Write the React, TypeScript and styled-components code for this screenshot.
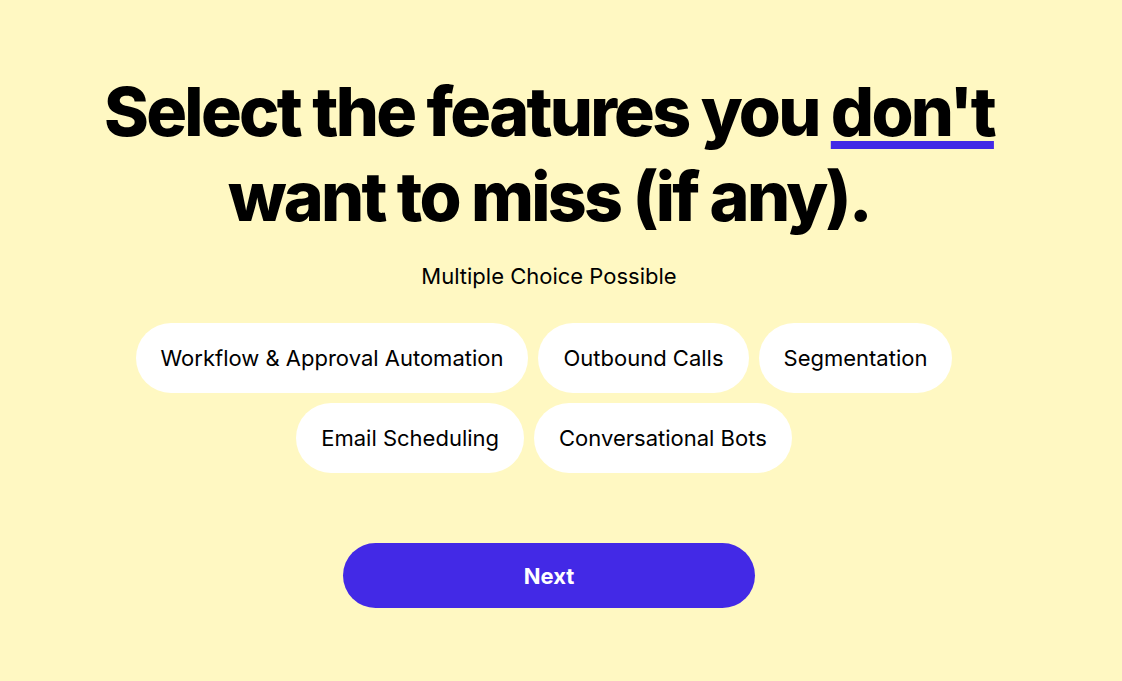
import React from 'react'
import styled, { createGlobalStyle } from 'styled-components'

const Colors = {
  Background: '#fff8c2',
  Primary: '#4329e6',
  Text: '#000000',
  Pill: '#ffffff',
}

const features = [
  ['Workflow & Approval Automation', 'Outbound Calls', 'Segmentation'],
  ['Email Scheduling', 'Conversational Bots'],
]

export default function App() {
  return (
    <>
      <GlobalStyle />
      <Page>
        <Heading>
          Select the features you <Underlined>don't</Underlined>
          <br />
          want to miss (if any).
        </Heading>
        <Hint>Multiple Choice Possible</Hint>
        <Options>
          {features.map((row, i) => (
            <OptionRow key={i}>
              {row.map((label) => (
                <Pill key={label} type="button">
                  {label}
                </Pill>
              ))}
            </OptionRow>
          ))}
        </Options>
        <NextButton type="button">Next</NextButton>
      </Page>
    </>
  )
}

const GlobalStyle = createGlobalStyle`
  html, body {
    margin: 0;
    padding: 0;
    background: ${Colors.Background};
  }
  body {
    font-family: Inter, 'Noto Sans', sans-serif;
    color: ${Colors.Text};
  }
`

const Page = styled.main`
  display: flex;
  flex-direction: column;
  align-items: center;
  min-height: 681px;
  padding: 69px 24px 0 0;
  box-sizing: border-box;
`

const Heading = styled.h1`
  margin: 0;
  font-size: 68px;
  line-height: 85px;
  font-weight: 800;
  letter-spacing: -0.04em;
  text-align: center;
`

const Underlined = styled.span`
  text-decoration: underline;
  text-decoration-color: ${Colors.Primary};
  text-decoration-thickness: 8px;
  text-underline-offset: 5px;
`

const Hint = styled.p`
  margin: 22px 0 0;
  font-size: 22px;
  line-height: 30px;
`

const Options = styled.div`
  display: flex;
  flex-direction: column;
  margin-top: 32px;
`

const OptionRow = styled.div`
  display: flex;
  justify-content: center;
`

const Pill = styled.button`
  height: 70px;
  margin: 0 10px 10px 0;
  padding: 0 25px;
  border: none;
  border-radius: 35px;
  background: ${Colors.Pill};
  font-family: inherit;
  font-size: 22px;
  color: ${Colors.Text};
  cursor: pointer;
`

const NextButton = styled.button`
  width: 412px;
  height: 65px;
  margin-top: 60px;
  border: none;
  border-radius: 33px;
  background: ${Colors.Primary};
  font-family: inherit;
  font-size: 22px;
  font-weight: 700;
  color: #ffffff;
  cursor: pointer;
`
